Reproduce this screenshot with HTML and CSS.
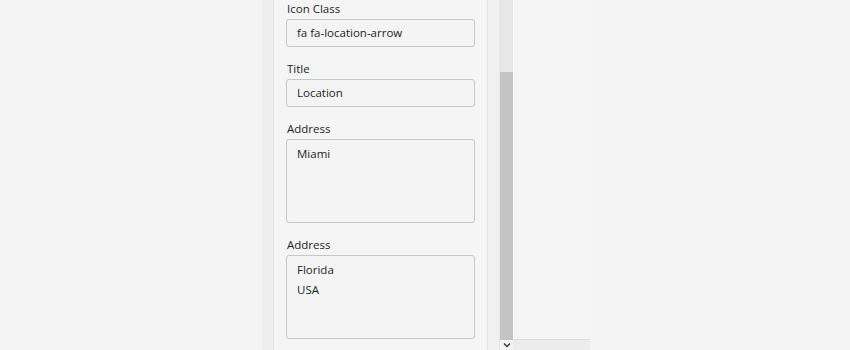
FILE: index.html
```html
<!DOCTYPE html>
<html>
<head>
<meta charset="utf-8">
<link rel="stylesheet" href="styles.css">
</head>
<body>
<div class="screen">
  <div class="left-space"></div>
  <div class="strip"></div>
  <div class="panel">
    <div class="field">
      <div class="label">Icon Class</div>
      <div class="input">fa fa-location-arrow</div>
    </div>
    <div class="field">
      <div class="label">Title</div>
      <div class="input">Location</div>
    </div>
    <div class="field">
      <div class="label">Address</div>
      <div class="textarea">Miami</div>
    </div>
    <div class="field">
      <div class="label">Address</div>
      <div class="textarea">Florida<br>USA</div>
    </div>
  </div>
  <div class="gutter"></div>
  <div class="vscroll">
    <div class="track"></div>
    <div class="thumb"></div>
    <div class="arrow">
      <svg width="8" height="6" viewBox="0 0 8 6"><path d="M1 1.5 L4 4.5 L7 1.5" fill="none" stroke="#333" stroke-width="1.4"/></svg>
    </div>
  </div>
  <div class="right">
    <div class="right-main"></div>
    <div class="hbar"></div>
  </div>
</div>
</body>
</html>
```
FILE: styles.css
```css
html, body {
  margin: 0;
  padding: 0;
  background: #f4f4f4;
}
.screen {
  display: flex;
  height: 350px;
  width: 850px;
  overflow: hidden;
  font-family: "Open Sans", "Noto Sans", sans-serif;
  color: #222;
}
.left-space {
  width: 262px;
  flex: none;
}
.strip {
  width: 11px;
  flex: none;
  background: #eeeef0;
  border-right: 1px solid #e2e2e4;
}
.panel {
  width: 213px;
  flex: none;
  background: #f5f5f5;
  padding: 1px 12px 0 12px;
  box-sizing: border-box;
}
.field {
  margin-bottom: 14px;
}
.label {
  font-size: 11.5px;
  line-height: 16px;
  padding-left: 1px;
  margin-bottom: 2px;
  color: #1e1e1e;
}
.input, .textarea {
  border: 1px solid #c6c6c6;
  border-radius: 3px;
  background: #f4f4f4;
  font-size: 11.5px;
  box-sizing: border-box;
  padding-left: 10px;
  color: #1e1e1e;
}
.input {
  height: 28px;
  line-height: 26px;
}
.textarea {
  height: 84px;
  line-height: 20px;
  padding-top: 4px;
}
.gutter {
  width: 13px;
  flex: none;
  background: #f0f0f2;
  border-left: 1px solid #e6e6e8;
  border-right: 1px solid #e6e6e8;
  box-sizing: border-box;
}
.vscroll {
  width: 13px;
  flex: none;
  display: flex;
  flex-direction: column;
  background: #e8e8e8;
}
.track {
  height: 72px;
  background: #e7e7e7;
}
.thumb {
  height: 268px;
  background: #c4c4c4;
}
.arrow {
  height: 10px;
  background: #f4f4f4;
  display: flex;
  justify-content: center;
  align-items: center;
}
.right {
  width: 77px;
  flex: none;
  display: flex;
  flex-direction: column;
}
.right-main {
  height: 340px;
  background: #f5f5f5;
  border-left: 1px solid #fafafa;
}
.hbar {
  height: 10px;
  background: #ececec;
  border-top: 1px solid #dedede;
}
```
